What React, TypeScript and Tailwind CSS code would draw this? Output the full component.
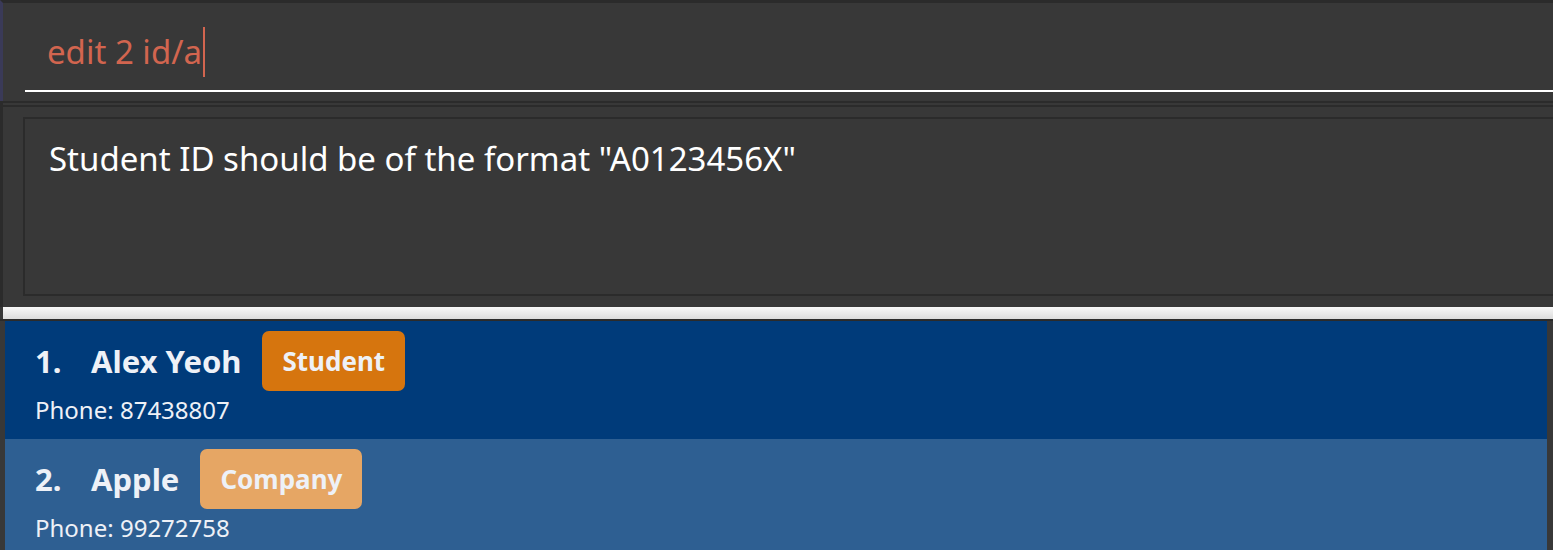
import { useState } from "react";

interface Person {
  name: string;
  phone: string;
  tag: string;
}

const PEOPLE: Person[] = [
  { name: "Alex Yeoh", phone: "87438807", tag: "Student" },
  { name: "Apple", phone: "99272758", tag: "Company" },
];

const FONT = "font-['Noto_Sans',sans-serif]";

function PersonCard({ person, index }: { person: Person; index: number }) {
  const selected = index === 0;
  const isStudent = person.tag === "Student";
  return (
    <div
      className={`h-[118px] pl-[30px] pt-[10px] ${selected ? "bg-[#003b7a]" : "bg-[#2e5f92]"}`}
    >
      <div className="flex items-center h-[60px]">
        <span className="w-[56px] text-[31px] font-bold text-[#eef1f7]">{index + 1}.</span>
        <span className="text-[31px] font-bold text-[#eef1f7]">{person.name}</span>
        <span
          className={`ml-[21px] h-[60px] px-[20px] flex items-center rounded-[7px] text-[26px] font-bold text-[#eef1f7] ${
            isStudent ? "bg-[#d6750e]" : "bg-[#e6a664]"
          }`}
        >
          {person.tag}
        </span>
      </div>
      <div className="text-[24px] text-[#eef1f7] leading-[30px] mt-[4px]">Phone: {person.phone}</div>
    </div>
  );
}

export default function App() {
  const [command] = useState("edit 2 id/a");

  return (
    <div className={`h-[550px] w-full overflow-hidden bg-[#383838] flex flex-col ${FONT}`}>
      {/* Command box */}
      <div className="h-[101px] shrink-0 border-t-[3px] border-l-[3px] border-t-[#2b2b2b] border-l-[#3a3a58] pl-[22px]">
        <div className="h-[89px] border-b-2 border-white flex items-center pl-[22px] pt-[10px]">
          <span className="text-[33px] text-[#d2654f] leading-none">{command}</span>
          <span className="ml-[1px] w-[2px] h-[50px] bg-[#d2654f]" />
        </div>
      </div>

      {/* Result display */}
      <div className="h-[206px] shrink-0 border-t-2 border-[#2b2b2b] border-l-[3px] border-l-[#2b2b2b] flex flex-col">
        <div className="h-[4px] border-b-2 border-[#2b2b2b]" />
        <div className="flex-1 pl-[20px] pt-[10px] pb-[11px]">
          <div className="h-full border-2 border-r-0 border-[#2b2b2b] pl-[24px] pt-[18px]">
            <p className="text-[33px] text-white leading-[44px]">
              Student ID should be of the format "A0123456X"
            </p>
          </div>
        </div>
      </div>

      {/* Splitter */}
      <div className="h-[12px] shrink-0 ml-[3px] bg-gradient-to-b from-[#f8f8f8] to-[#dcdcdc]" />
      <div className="h-[2px] shrink-0 bg-[#2b2b2b]" />

      {/* Person list */}
      <div className="flex-1 pl-[5px] pr-[6px]">
        {PEOPLE.map((p, i) => (
          <PersonCard key={p.name} person={p} index={i} />
        ))}
      </div>
    </div>
  );
}
